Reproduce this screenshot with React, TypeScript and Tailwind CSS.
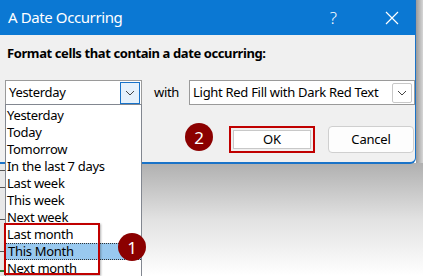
import React from "react";

const font = { fontFamily: '"Noto Sans", "Liberation Sans", sans-serif' };

function Chevron() {
  return (
    <svg width="10" height="6" viewBox="0 0 10 6" fill="none">
      <path d="M1 1 L5 5 L9 1" stroke="#444" strokeWidth="1" />
    </svg>
  );
}

export default function App() {
  const items = [
    "Yesterday",
    "Today",
    "Tomorrow",
    "In the last 7 days",
    "Last week",
    "This week",
    "Next week",
    "Last month",
    "This Month",
    "Next month",
  ];
  return (
    <div className="relative w-[423px] h-[276px] overflow-hidden bg-white" style={font}>
      {/* background below dialog */}
      <div className="absolute left-0 top-[163px] w-[423px] h-[113px] bg-gradient-to-b from-[#b0b0b0] via-[#e2e2e2] to-white" />
      <div className="absolute left-0 top-[163px] w-[5px] h-[113px] bg-[#e8e8e8]">
        <div className="h-[8px] border-b border-[#555]" />
        <div className="h-[17px] border-b border-[#555]" />
        <div className="h-[32px] border-b border-[#555]" />
        <div className="h-[32px] border-b border-[#555]" />
        <div className="h-[20px] border-b-2 border-[#2e7d32]" />
      </div>
      <div className="absolute left-[416px] top-0 w-[7px] h-[163px] bg-gradient-to-r from-[#9a9a9a] to-[#d6d6d6]" />

      {/* dialog */}
      <div className="relative w-[416px] h-[164px] bg-[#f0f0f0] border-b-2 border-r border-[#1a73c8] rounded-br-[6px] overflow-hidden">
        <div className="h-[35px] bg-[#0b78d3] flex items-center pl-[8px] text-white">
          <span className="text-[15px] leading-none tracking-[-0.4px]">A Date Occurring</span>
          <span className="ml-auto mr-[48px] text-[17px] leading-none font-light">?</span>
          <svg width="14" height="14" viewBox="0 0 14 14" className="mr-[16px]">
            <path d="M1 1 L13 13 M13 1 L1 13" stroke="white" strokeWidth="1.2" />
          </svg>
        </div>
        <div className="pl-[7px] pt-[10px] text-[13px] font-bold text-black leading-[16px] tracking-[-0.4px] whitespace-nowrap">
          Format cells that contain a date occurring:
        </div>
        <div className="flex items-center mt-[19px] pl-[5px]">
          <div className="w-[137px] h-[25px] bg-white border border-[#9a9a9a] flex items-center pl-[3px] pr-[1px]">
            <span className="text-[13px] text-black leading-none tracking-[-0.3px]">Yesterday</span>
            <div className="ml-auto w-[20px] h-[22px] border border-[#1672c9] bg-[#e5f1fb] flex items-center justify-center">
              <Chevron />
            </div>
          </div>
          <span className="ml-[12px] text-[13px] text-black leading-none tracking-[-0.3px]">with</span>
          <div className="ml-[10px] w-[226px] h-[25px] bg-white border border-[#9a9a9a] flex items-center pl-[3px] pr-[2px]">
            <span className="text-[13px] text-black leading-none tracking-[-0.3px] whitespace-nowrap">Light Red Fill with Dark Red Text</span>
            <div className="ml-auto w-[20px] h-[20px] border border-[#c8c8c8] bg-white rounded-[2px] flex items-center justify-center">
              <Chevron />
            </div>
          </div>
        </div>
        <div className="flex mt-[21px] pl-[229px]">
          <div className="w-[86px] h-[27px] border-2 border-[#c00000] p-[2px]">
            <div className="w-full h-full bg-white border border-[#c8c8c8] flex items-center justify-center text-[13px] text-black leading-none">
              OK
            </div>
          </div>
          <div className="ml-[13px] w-[86px] h-[27px] bg-[#fdfdfd] border border-[#cfcfcf] rounded-[4px] flex items-center justify-center text-[13px] text-black leading-none tracking-[-0.2px]">
            Cancel
          </div>
        </div>
      </div>

      {/* dropdown list */}
      <div className="absolute left-[5px] top-[104px] w-[137px] h-[180px] bg-white border border-[#828790] pt-[2px]">
        {items.map((it) => (
          <div
            key={it}
            className={
              it === "This Month"
                ? "h-[17px] text-[13px] leading-[15px] tracking-[-0.3px] text-black bg-[#99c9ef] border border-dotted border-[#333] -ml-[1px] pl-[2px] whitespace-nowrap"
                : "h-[17px] pl-[1px] text-[13px] leading-[17px] tracking-[-0.3px] text-black whitespace-nowrap"
            }
          >
            {it}
          </div>
        ))}
      </div>

      {/* red highlight box */}
      <div className="absolute left-[4px] top-[223px] w-[96px] h-[52px] border-2 border-[#c00000] shadow-[1px_1px_2px_rgba(0,0,0,0.3)]" />

      {/* badges */}
      <div className="absolute left-[118px] top-[233px] w-[28px] h-[28px] rounded-full bg-[#8b0000] text-white text-[17px] flex items-center justify-center leading-none">
        1
      </div>
      <div className="absolute left-[185px] top-[123px] w-[28px] h-[28px] rounded-full bg-[#8b0000] text-white text-[17px] flex items-center justify-center leading-none">
        2
      </div>
    </div>
  );
}
